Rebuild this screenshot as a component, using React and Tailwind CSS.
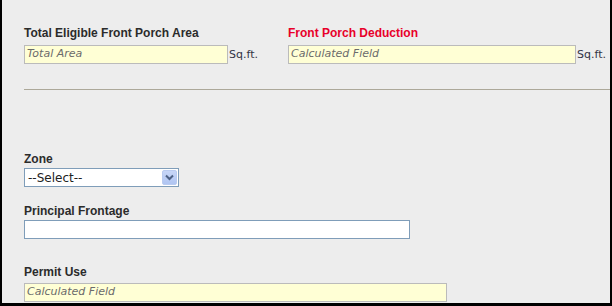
export default function App() {
  const label = "text-[12px] leading-[15px] font-bold text-[#2b2b2b] [font-family:'Liberation_Sans',Arial,sans-serif]";
  const ph = "text-[11px] italic text-[#6b6b6b] [font-family:'DejaVu_Sans',Verdana,sans-serif]";
  const sq = "ml-[1px] text-[11px] text-[#333344] [font-family:'DejaVu_Sans',Verdana,sans-serif] leading-none";
  return (
    <div className="w-[612px] h-[306px] bg-[#EDEDED] border-l-2 border-r-2 border-b-[3px] border-black overflow-hidden box-border">
      <div className="pl-[22px] pt-[26px] flex flex-col">
        <div className="flex">
          <div className="flex flex-col w-[264px]">
            <div className={label}>Total Eligible Front Porch Area</div>
            <div className="flex items-center mt-[4px]">
              <div className="w-[204px] h-[19px] bg-[#FFFFD5] border border-[#BBBBBB] flex items-center pl-[2px]">
                <span className={ph}>Total Area</span>
              </div>
              <span className={sq}>Sq.ft.</span>
            </div>
          </div>
          <div className="flex flex-col">
            <div className={label + " !text-[#E8002A]"}>Front Porch Deduction</div>
            <div className="flex items-center mt-[4px]">
              <div className="w-[288px] h-[19px] bg-[#FFFFD5] border border-[#BBBBBB] flex items-center pl-[2px]">
                <span className={ph}>Calculated Field</span>
              </div>
              <span className={sq}>Sq.ft.</span>
            </div>
          </div>
        </div>
        <div className="mt-[25px] h-[1px] bg-[#ACA899] w-full" />
        <div className="mt-[62px] flex flex-col">
          <div className={label}>Zone</div>
          <div className="mt-[1px] w-[155px] h-[19px] bg-white border border-[#7F9DB9] flex items-center justify-between pr-[1px]">
            <span className="pl-[3px] text-[12px] text-[#222] [font-family:'DejaVu_Sans',Verdana,sans-serif]">--Select--</span>
            <div className="w-[15px] h-[15px] bg-gradient-to-b from-[#C7D6F7] to-[#B0C5F2] border border-[#B9CBF0] rounded-[2px] flex items-center justify-center">
              <svg width="9" height="7" viewBox="0 0 9 7">
                <path d="M1 1.5 L4.5 5 L8 1.5" fill="none" stroke="#4D6185" strokeWidth="2" />
              </svg>
            </div>
          </div>
        </div>
        <div className="mt-[17px] flex flex-col">
          <div className={label}>Principal Frontage</div>
          <div className="mt-[1px] w-[386px] h-[19px] bg-white border border-[#7F9DB9]" />
        </div>
        <div className="mt-[26px] flex flex-col">
          <div className={label}>Permit Use</div>
          <div className="mt-[3px] w-[423px] h-[19px] bg-[#FFFFD5] border border-[#BBBBBB] flex items-center pl-[2px]">
            <span className={ph}>Calculated Field</span>
          </div>
        </div>
      </div>
    </div>
  );
}
